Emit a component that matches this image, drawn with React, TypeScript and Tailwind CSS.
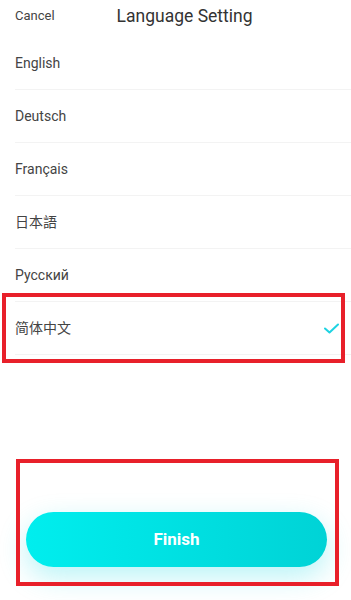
import React from 'react';

const LANGUAGES = ['English', 'Deutsch', 'Français', '日本語', 'Русский', '简体中文'];

const SELECTED = '简体中文';

const App: React.FC = () => {
  return (
    <div
      className="relative w-[351px] h-[600px] bg-white overflow-hidden text-[#333]"
      style={{ fontFamily: 'Roboto, "Noto Sans CJK SC", sans-serif' }}
    >
      {/* Header */}
      <div className="flex items-center h-[32px] mb-[5px] pl-[15px]">
        <span className="text-[13px] text-[#444]">Cancel</span>
        <span className="ml-[62px] text-[17.5px] text-[#333]">Language Setting</span>
      </div>

      {/* Language list */}
      <div className="flex flex-col">
        {LANGUAGES.map((lang) => (
          <div
            key={lang}
            className="ml-[15px] h-[53px] flex items-center justify-between border-b border-[#f3f3f3] pr-[12px]"
          >
            <span className="text-[14px] text-[#444]">{lang}</span>
            {lang === SELECTED && (
              <svg width="15" height="11" viewBox="0 0 15 11" fill="none">
                <path
                  d="M1 5.5 L5.5 9.5 L14 1.5"
                  stroke="#1ed3e2"
                  strokeWidth="2"
                  strokeLinecap="round"
                  strokeLinejoin="round"
                />
              </svg>
            )}
          </div>
        ))}
      </div>

      {/* Finish button */}
      <div className="mt-[157px] ml-[26px] w-[301px]">
        <button className="w-full h-[55px] rounded-full bg-gradient-to-r from-[#00eeee] to-[#00d3d6] text-white font-bold text-[17px] shadow-[0_10px_28px_rgba(0,215,225,0.28)]">
          Finish
        </button>
      </div>

      {/* Annotation boxes */}
      <div className="absolute left-[2px] top-[293px] w-[343px] h-[70px] border-[4px] border-[#e8202a] pointer-events-none" />
      <div className="absolute left-[16px] top-[459px] w-[323px] h-[127px] border-[4px] border-[#e8202a] pointer-events-none" />
    </div>
  );
};

export default App;
